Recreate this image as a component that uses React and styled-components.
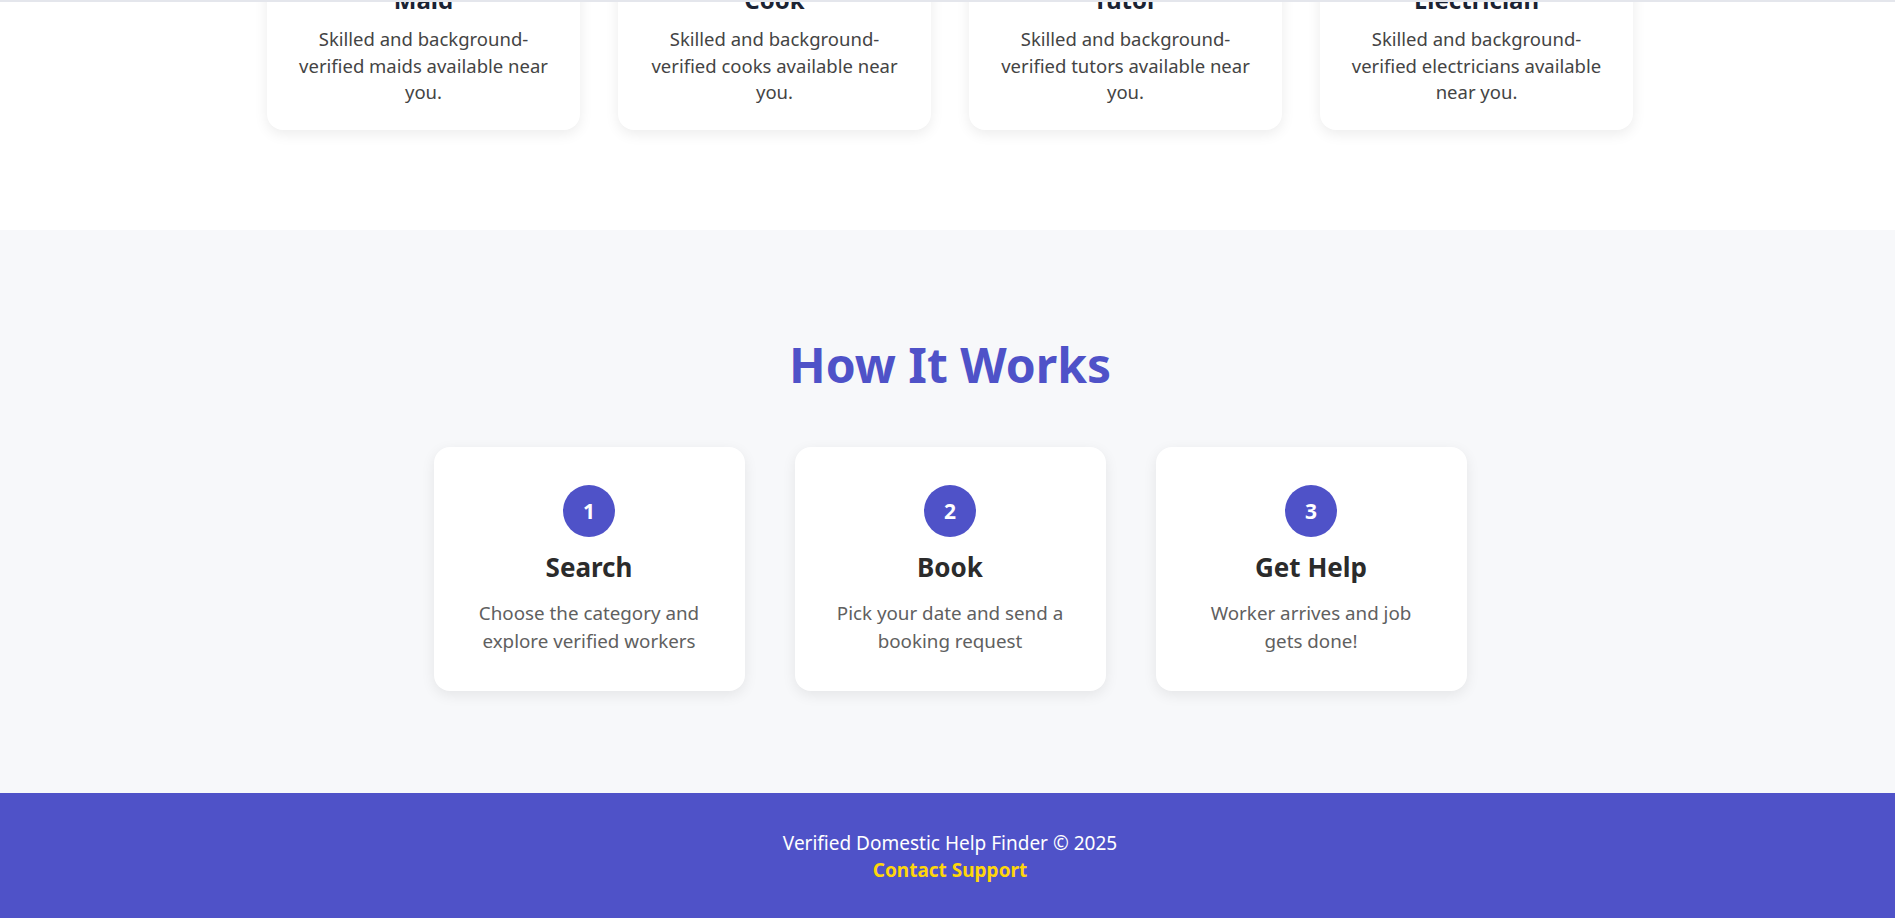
import React from 'react';
import styled, { createGlobalStyle } from 'styled-components';

const services = [
  { title: 'Maid', text: 'Skilled and background-verified maids available near you.' },
  { title: 'Cook', text: 'Skilled and background-verified cooks available near you.' },
  { title: 'Tutor', text: 'Skilled and background-verified tutors available near you.' },
  { title: 'Electrician', text: 'Skilled and background-verified electricians available near you.' },
];

const steps = [
  { num: 1, title: 'Search', text: 'Choose the category and explore verified workers' },
  { num: 2, title: 'Book', text: 'Pick your date and send a booking request' },
  { num: 3, title: 'Get Help', text: 'Worker arrives and job gets done!' },
];

const App = () => {
  return (
    <Page>
      <GlobalStyle />
      <HeaderEdge />
      <ServicesSection>
        <ServiceGrid>
          {services.map(s => (
            <ServiceCard key={s.title}>
              <h3>{s.title}</h3>
              <p>{s.text}</p>
            </ServiceCard>
          ))}
        </ServiceGrid>
      </ServicesSection>

      <HowSection>
        <SectionTitle>How It Works</SectionTitle>
        <StepGrid>
          {steps.map(step => (
            <StepCard key={step.num}>
              <StepNumber>{step.num}</StepNumber>
              <h3>{step.title}</h3>
              <p>{step.text}</p>
            </StepCard>
          ))}
        </StepGrid>
      </HowSection>

      <Footer>
        <p>Verified Domestic Help Finder © 2025</p>
        <a href="#support">Contact Support</a>
      </Footer>
    </Page>
  );
};

const GlobalStyle = createGlobalStyle`
  * {
    box-sizing: border-box;
  }

  body {
    margin: 0;
    font-family: 'Noto Sans', 'Open Sans', sans-serif;
    background: #ffffff;
    overflow: hidden;
  }
`;

const Page = styled.div`
  display: flex;
  flex-direction: column;
  min-height: 918px;
`;

const HeaderEdge = styled.div`
  position: sticky;
  top: 0;
  z-index: 10;
  height: 2px;
  background: #e4e6ec;
`;

const ServicesSection = styled.section`
  margin-top: -57px;
  padding: 0 0 100px 5px;
  background: #ffffff;
`;

const ServiceGrid = styled.div`
  display: grid;
  grid-template-columns: repeat(4, 313px);
  gap: 38px;
  justify-content: center;
`;

const ServiceCard = styled.div`
  background: #fff;
  border-radius: 16px;
  box-shadow: 0 4px 14px rgba(0, 0, 0, 0.08);
  padding: 40px 24px 24px;
  text-align: center;

  h3 {
    margin: 0 0 12px;
    font-size: 24px;
    line-height: 29px;
    font-weight: 700;
    color: #1b2333;
  }

  p {
    margin: 0;
    font-size: 18.5px;
    line-height: 26.5px;
    color: #444;
  }
`;

const HowSection = styled.section`
  background: #f7f8fa;
  padding: 105px 0 102px 5px;
  text-align: center;
`;

const SectionTitle = styled.h2`
  margin: 0 0 52px;
  font-size: 48px;
  line-height: 60px;
  font-weight: 700;
  color: #4f52c8;
`;

const StepGrid = styled.div`
  display: grid;
  grid-template-columns: repeat(3, 311px);
  gap: 50px;
  justify-content: center;
`;

const StepCard = styled.div`
  background: #fff;
  border-radius: 16px;
  box-shadow: 0 4px 14px rgba(0, 0, 0, 0.08);
  padding: 38px 38px 36px;
  display: flex;
  flex-direction: column;
  align-items: center;

  h3 {
    margin: 14px 0 16px;
    font-size: 26px;
    line-height: 32px;
    font-weight: 700;
    color: #2b2b2b;
  }

  p {
    margin: 0;
    font-size: 18.8px;
    line-height: 28px;
    color: #606060;
  }
`;

const StepNumber = styled.div`
  width: 52px;
  height: 52px;
  border-radius: 50%;
  background: #4f52c8;
  color: #fff;
  font-size: 21px;
  font-weight: 700;
  display: flex;
  align-items: center;
  justify-content: center;
`;

const Footer = styled.footer`
  flex: 1;
  background: #4f52c8;
  color: #fff;
  text-align: center;
  padding: 37px 0 37px 5px;

  p {
    margin: 0;
    font-size: 19px;
    line-height: 27px;
  }

  a {
    display: block;
    font-size: 19px;
    line-height: 27px;
    font-weight: 700;
    color: #ffd60a;
    text-decoration: none;
  }
`;

export default App;
